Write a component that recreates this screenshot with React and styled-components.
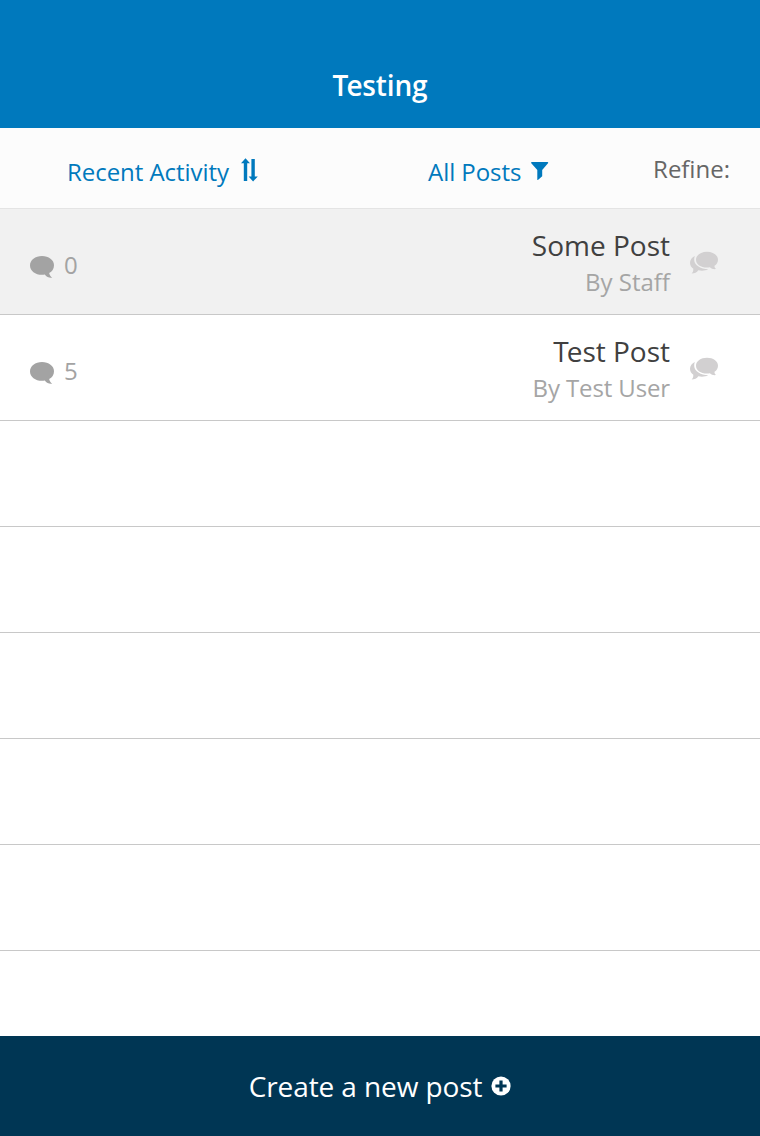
import React from "react";
import styled, { createGlobalStyle } from "styled-components";

const GlobalStyle = createGlobalStyle`
  * { box-sizing: border-box; }
  body {
    margin: 0;
    background: #fff;
    font-family: "Open Sans", "Noto Sans", sans-serif;
  }
`;

const Screen = styled.div`
  width: 760px;
  height: 1136px;
  display: flex;
  flex-direction: column;
  overflow: hidden;
`;

const Header = styled.header`
  flex: none;
  height: 128px;
  padding-top: 42px;
  background: #0079bd;
  color: #fff;
  text-align: center;
`;

const Title = styled.h1`
  margin: 0;
  font-size: 28px;
  font-weight: 600;
  line-height: 86px;
  letter-spacing: -0.15px;

  &::first-letter {
    letter-spacing: -2px;
  }
`;

const FilterBar = styled.div`
  flex: none;
  height: 81px;
  display: flex;
  padding: 0 30px 0 67px;
  background: #fcfcfc;
  border-bottom: 1px solid #e4e4e4;
  font-size: 24px;
`;

const Filter = styled.button`
  display: flex;
  padding: 4px 0 0;
  border: 0;
  background: none;
  color: #0079bd;
  font: inherit;
  letter-spacing: -0.05px;
  line-height: 80px;
  text-align: left;
  white-space: nowrap;
  width: ${(p) => p.$width}px;

  svg {
    flex: none;
    margin: ${(p) => p.$iconMargin};
  }
`;

const RefineLabel = styled.span`
  margin-left: auto;
  color: #666;
  line-height: 81px;
`;

const List = styled.ul`
  flex: 1;
  min-height: 0;
  margin: 0;
  padding: 0;
  list-style: none;
  overflow: hidden;
`;

const Row = styled.li`
  height: 106px;
  display: flex;
  align-items: flex-start;
  padding: 0 42px 0 30px;
  border-bottom: 1px solid #c8c8c8;
  background: ${(p) => (p.$active ? "#f1f1f1" : "#fff")};
`;

const Count = styled.div`
  display: flex;
  gap: 10px;
  color: #a3a3a3;
  font-size: 24px;
  line-height: 112px;

  svg {
    margin-top: 47px;
  }
`;

const PostText = styled.div`
  flex: 1;
  padding-top: 16px;
  text-align: right;
`;

const PostTitle = styled.div`
  color: #404040;
  font-size: 28px;
  line-height: 40px;

  &::first-letter {
    letter-spacing: ${(p) => (p.children.startsWith("T") ? "-2px" : "0")};
  }
`;

const Author = styled.div`
  color: #a5a5a5;
  font-size: 24px;
  line-height: 34px;
  letter-spacing: ${(p) => p.$tracking};
`;

const Thread = styled.div`
  margin: 42px 0 0 20px;
  line-height: 0;
`;

const Footer = styled.button`
  flex: none;
  height: 100px;
  display: flex;
  justify-content: center;
  gap: 9px;
  padding: 0;
  border: 0;
  background: #003654;
  color: #fff;
  font: inherit;
  font-size: 28px;
  letter-spacing: -0.1px;
  line-height: 100px;

  svg {
    margin-top: 40px;
  }
`;

const SortIcon = () => (
  <svg width="17" height="24" viewBox="0 0 17 24" fill="currentColor">
    <path d="M4.5 0.3L9 5.2H6.2V23H2.8V5.2H0Z" />
    <path d="M10.4 1H13.8V18.4H16.8L12.1 23.4L7.6 18.4H10.4Z" />
  </svg>
);

const FunnelIcon = () => (
  <svg width="18" height="20" viewBox="0 0 18 20" fill="currentColor">
    <path d="M0.8 1H16.5Q17.6 1.3 17 2.3L11.2 9.1V15.2L6.9 18.9Q6.3 19 6.3 18.4V9.1L0.3 2.3Q-0.3 1.3 0.8 1Z" />
  </svg>
);

const BubbleIcon = () => (
  <svg width="24" height="23" viewBox="0 0 24 23" fill="currentColor">
    <path d="M12 0C18.7 0 24 4 24 9.2C24 12.8 22.1 15.4 19.2 17.1C19.4 19 20.5 20.6 22.2 21.7C19.4 22.2 16.6 21 14.8 18.5C13.9 18.7 13 18.8 12 18.8C5.3 18.8 0 14.7 0 9.4C0 4.1 5.3 0 12 0Z" />
  </svg>
);

const ThreadIcon = () => (
  <svg width="28" height="23" viewBox="0 0 28 23" fill="#d2d0d1">
    <path d="M17 0.8C23.2 0.8 28 4.2 28 8.8C28 11.4 26.7 13.5 24.5 14.8C24.4 16.2 25 17.4 26.2 18.1C23.8 18.6 21.4 17.8 19.8 16.3C18.9 16.5 18 16.6 17 16.6C10.8 16.6 6 13.2 6 8.7C6 4.2 10.8 0.8 17 0.8Z" />
    <path d="M4.8 5C2 6.3 0 9 0 11.8C0 14.4 1.2 16.4 3.3 17.7C3.4 19.6 2.9 21.3 1.7 22.5C4.6 22.5 6.9 21.4 8.3 19.3C11.9 20 15.5 19.7 18.2 18.2C11.2 18.3 4.4 14.6 4.2 9.1C4.1 7.6 4.3 6.2 4.8 5Z" />
  </svg>
);

const PlusIcon = () => (
  <svg width="20" height="20" viewBox="0 0 20 20">
    <circle cx="10" cy="10" r="9.6" fill="#fff" />
    <path d="M10 4.4V15.6M4.4 10H15.6" stroke="#003654" strokeWidth="3.2" />
  </svg>
);

const posts = [
  { title: "Some Post", author: "Staff", replies: 0, active: true },
  { title: "Test Post", author: "Test User", replies: 5, active: false },
];

const EMPTY_ROWS = 6;

export default function App() {
  return (
    <Screen>
      <GlobalStyle />
      <Header>
        <Title>Testing</Title>
      </Header>
      <FilterBar>
        <Filter $width={361} $iconMargin="26px 0 0 12px">
          Recent Activity
          <SortIcon />
        </Filter>
        <Filter $width={122} $iconMargin="29px 0 0 10px">
          All Posts
          <FunnelIcon />
        </Filter>
        <RefineLabel>Refine:</RefineLabel>
      </FilterBar>
      <List>
        {posts.map((post) => (
          <Row key={post.title} $active={post.active}>
            <Count>
              <BubbleIcon />
              {post.replies}
            </Count>
            <PostText>
              <PostTitle>{post.title}</PostTitle>
              <Author $tracking={post.author.startsWith("T") ? "-0.12px" : "0"}>
                By {post.author}
              </Author>
            </PostText>
            <Thread>
              <ThreadIcon />
            </Thread>
          </Row>
        ))}
        {Array.from({ length: EMPTY_ROWS }, (_, i) => (
          <Row key={i} />
        ))}
      </List>
      <Footer>
        Create a new post
        <PlusIcon />
      </Footer>
    </Screen>
  );
}
